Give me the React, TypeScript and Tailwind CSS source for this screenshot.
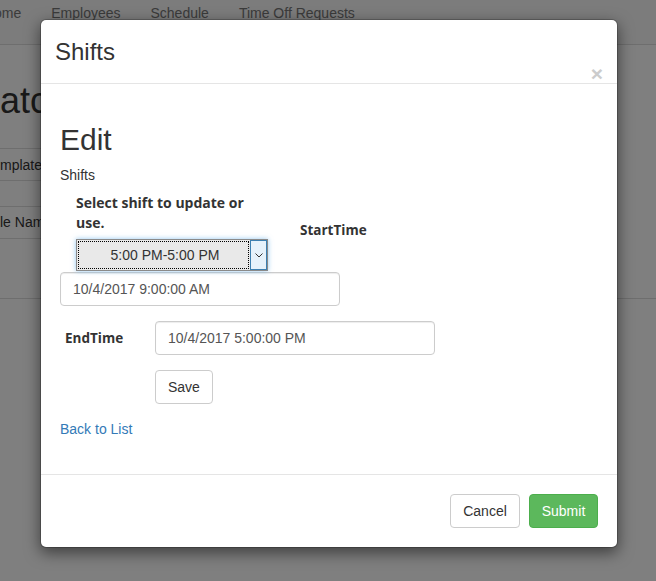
export default function App() {
  return (
    <div className="relative h-[581px] w-[656px] overflow-hidden bg-white font-['Liberation_Sans',Arial,sans-serif] text-[14px] text-[#333]">
      {/* page behind the modal */}
      <nav className="flex h-[45px] gap-[30px] border-b border-[#ddd] bg-[#f8f8f8] pt-[3px] leading-[20px] text-[#777]">
        <span className="-ml-[6px]">ome</span>
        <span>Employees</span>
        <span>Schedule</span>
        <span>Time Off Requests</span>
      </nav>
      <h1 className="mt-[36px] text-[36px] leading-[40px]">atch</h1>
      <div className="mt-[27px] w-[300px]">
        <div className="h-[33px] border-y border-[#ddd] pt-[6px] leading-[20px]">mplate</div>
        <div className="h-[26px] border-b border-[#ddd]" />
        <div className="h-[32px] border-b border-[#ddd] pt-[5px] leading-[20px]">le Nam</div>
      </div>
      <div className="mt-[59px] border-b border-[#ddd]" />

      {/* backdrop + modal */}
      <div className="absolute inset-0 bg-black/50 pl-[40px] pt-[19px]">
        <div className="w-[578px] rounded-[6px] border border-black/20 bg-white bg-clip-padding shadow-[0_5px_15px_rgba(0,0,0,0.5)]">
          <div className="flex h-[64px] flex-col border-b border-[#e5e5e5] pl-[14px] pr-[14px] pt-[19px]">
            <h3 className="text-[24px] leading-[26px] text-[#333]">Shifts</h3>
            <div className="flex justify-end">
              <span className="text-[21px] font-bold leading-[17px] text-[#ccc]">×</span>
            </div>
          </div>

          <div className="pb-[35px] pl-[19px] pt-[39px]">
            <h2 className="text-[30px] leading-[33px]">Edit</h2>
            <div className="mt-[9px] leading-[20px]">Shifts</div>

            <div className="mt-[8px] flex items-start">
              <div className="ml-[16px] w-[192px]">
                <label className="block font-['Open_Sans',sans-serif] text-[14px] font-bold leading-[20px] text-[#333]">
                  Select shift to update or use.
                </label>
                <div className="mt-[6px] flex h-[32px] w-[192px] border border-[#8a8a8a] bg-[#e9e9e9] shadow-[0_0_5px_rgba(102,175,233,0.7)]">
                  <div className="m-[1px] flex flex-1 items-center justify-center border border-dotted border-black pl-[3px] leading-[20px] text-[#333]">
                    5:00 PM-5:00 PM
                  </div>
                  <div className="flex w-[17px] items-center justify-center border border-[#3c7fb1] bg-[#e5f1fb]">
                    <svg width="8" height="5" viewBox="0 0 8 5" fill="none" stroke="#333" strokeWidth="1">
                      <path d="M0.5 0.5 L4 4 L7.5 0.5" />
                    </svg>
                  </div>
                </div>
              </div>
              <label className="ml-[32px] mt-[27px] font-['Open_Sans',sans-serif] text-[13.5px] font-bold leading-[20px] text-[#333]">
                StartTime
              </label>
            </div>

            <div className="mt-[1px] flex h-[34px] w-[280px] items-center rounded-[4px] border border-[#ccc] px-[12px] text-[#555] shadow-[inset_0_1px_1px_rgba(0,0,0,0.075)]">
              10/4/2017 9:00:00 AM
            </div>

            <div className="mt-[15px] flex items-center">
              <label className="w-[95px] pl-[5px] font-['Open_Sans',sans-serif] text-[13.5px] font-bold leading-[20px] text-[#333]">
                EndTime
              </label>
              <div className="flex h-[34px] w-[280px] items-center rounded-[4px] border border-[#ccc] px-[12px] text-[#555] shadow-[inset_0_1px_1px_rgba(0,0,0,0.075)]">
                10/4/2017 5:00:00 PM
              </div>
            </div>

            <button className="ml-[95px] mt-[15px] h-[34px] rounded-[4px] border border-[#ccc] bg-white px-[12px] leading-[20px] text-[#333]">
              Save
            </button>

            <div className="mt-[15px] leading-[20px]">
              <a className="text-[#337ab7]">Back to List</a>
            </div>
          </div>

          <div className="flex justify-end gap-[9px] border-t border-[#e5e5e5] pb-[19px] pr-[19px] pt-[19px]">
            <button className="h-[34px] w-[70px] rounded-[4px] border border-[#ccc] bg-white leading-[20px] text-[#333]">
              Cancel
            </button>
            <button className="h-[34px] w-[69px] rounded-[4px] border border-[#4cae4c] bg-[#5cb85c] leading-[20px] text-white">
              Submit
            </button>
          </div>
        </div>
      </div>
    </div>
  );
}
